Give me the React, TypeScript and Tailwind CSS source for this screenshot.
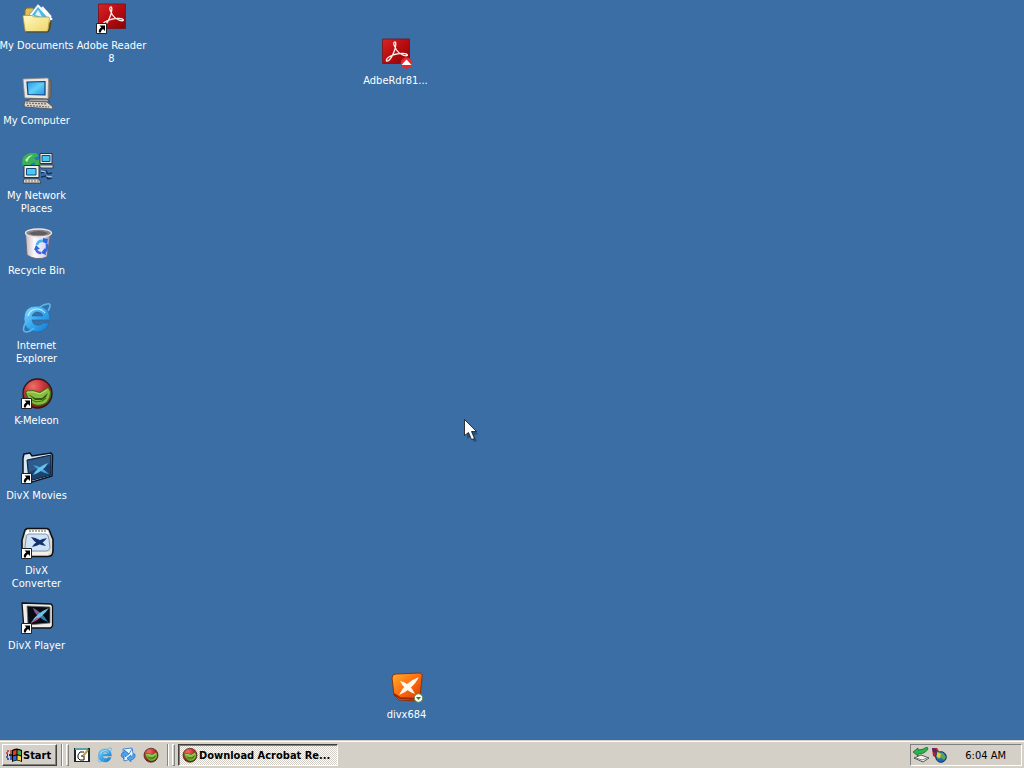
import type { ReactNode } from "react";

function ShortcutArrow() {
  return (
    <g>
      <path d="M.5 21.500h10v10H.5z" fill="#fff" stroke="#222" strokeWidth="1" />
      <path d="M3.500 23.500h5.500V29l-2-2q-2 1-2.200 3.500H3Q2 27.500 5.300 25.300z" fill="#000" />
    </g>
  );
}

function Icon32({ children }: { children: ReactNode }) {
  return (
    <svg viewBox="0 0 32 32" className="size-8 shrink-0 overflow-visible" aria-hidden="true">
      {children}
    </svg>
  );
}

function DocumentsIcon() {
  return (
    <Icon32>
      <defs>
        <linearGradient id="folder" x1="0" y1="0" x2="1" y2="1">
          <stop offset="0" stopColor="#fffac0" />
          <stop offset="1" stopColor="#efd56a" />
        </linearGradient>
      </defs>
      <path d="M4 14V8l2-2h6l2 3h13v18H5z" fill="#e2c04e" stroke="#8f7524" />
      <path d="m8 13 9-11 15 15-5 5z" fill="#f6fbff" stroke="#6d8fb0" strokeWidth=".8" />
      <path d="m11 13 6-8 9 10-4 3z" fill="#4fb7e8" />
      <path d="m14 13 3-5 2 3 2 4z" fill="#d8f4fa" />
      <path d="m21 5 9 10" stroke="#fff" strokeWidth="2" />
      <path d="M2 14.500q0-1 1-1h8l2 1.500h14q1.500 0 1.500 1.500L27 28q0 1.500-1.500 1.500H5.500Q4 29.500 4 28z" fill="url(#folder)" stroke="#b59a3e" strokeWidth=".8" />
      <path d="M5 30h22l2-4 1-8" fill="none" stroke="#4b471c" strokeWidth="1.200" />
    </Icon32>
  );
}

function ComputerIcon() {
  return (
    <Icon32>
      <defs>
        <linearGradient id="screen" x1="0" y1="0" x2="1" y2="1">
          <stop offset="0" stopColor="#2b93e4" />
          <stop offset=".5" stopColor="#5fd0fb" />
          <stop offset="1" stopColor="#2492e0" />
        </linearGradient>
      </defs>
      <path d="m26 2 4 2v16l-4 3z" fill="#77716c" stroke="#4d4947" strokeWidth=".6" />
      <path d="m2 2 24-1q1.500 0 1.500 1.500L27 22 5 21q-1.500 0-1.500-1.500z" fill="#e9e6e1" stroke="#8d8a86" strokeWidth=".8" />
      <path d="m6 5 18-.5V18l-17-.5z" fill="url(#screen)" stroke="#123f77" strokeWidth="1.200" />
      <path d="M8 22h18l3 3H6z" fill="#aaa6a2" stroke="#333" strokeWidth=".8" />
      <path d="m4 24 22 1 6 5-1 2-27-2-1-2z" fill="#d8d3cd" stroke="#504b48" strokeWidth=".8" />
      <path d="m5 26 21 1M6 28.500l22 1.500" stroke="#786b66" strokeWidth="1.200" strokeDasharray="2 1" />
    </Icon32>
  );
}

function NetworkIcon() {
  return (
    <Icon32>
      <circle cx="11" cy="11" r="10" fill="#2673c4" />
      <path d="M1 11q0-8 8-10h6l3 3-5 2 3 3-6 3-1 5-5 2zM14 9l5-2 2 5-4 7-4-3z" fill="#39b255" />
      <path d="m4 8 4-4 4-1-4 3-2 4z" fill="#c2f5b3" />
      <path d="M19 1.500h12v10H19z" fill="#eceae5" stroke="#333" />
      <path d="M21 3.500h8v6h-8z" fill="#42c6f2" stroke="#16477d" />
      <path d="M18 13h14v3H20z" fill="#ddd8d0" stroke="#333" strokeWidth=".8" />
      <path d="M3 13.500h15v12H3z" fill="#f1eee8" stroke="#333" />
      <path d="M5.500 16.500H15v6.500H5.500z" fill="#47cbf5" stroke="#17477c" />
      <path d="M3 27h15l2 4H2z" fill="#e5dfd5" stroke="#333" strokeWidth=".8" />
      <path d="M4 29h14" stroke="#706860" strokeDasharray="2 1" />
      <path d="m20 21 5-2 2 3 4-1M20 25l5-1 2 3 4-1" fill="none" stroke="#162f61" strokeWidth="1.500" />
      <path d="m20 19 5 1M25 24l6 1" stroke="#b9d6f2" />
    </Icon32>
  );
}

function RecycleIcon() {
  return (
    <Icon32>
      <defs>
        <linearGradient id="bin" x1="0" x2="1">
          <stop offset="0" stopColor="#c4b9be" />
          <stop offset=".35" stopColor="#fbfaff" />
          <stop offset=".75" stopColor="#dadaf4" />
          <stop offset="1" stopColor="#807a87" />
        </linearGradient>
      </defs>
      <path d="m4.500 6 1.500 22q9 6 20 2L30 5z" fill="url(#bin)" stroke="#67616a" strokeWidth=".8" />
      <ellipse cx="17.500" cy="6" rx="13" ry="4" fill="#8c8588" stroke="#e8e5e8" strokeWidth="1.300" />
      <path d="M8 6q10-4 19 0l-3 2H11z" fill="#625c60" />
      <g fill="none" strokeWidth="2.600">
        <path d="M16 18q1-5 7-4" stroke="#4bb4ec" />
        <path d="M26 17q1 6-3 8" stroke="#3569e0" />
        <path d="M20 26q-4 0-5-4" stroke="#5263dd" />
      </g>
      <path d="m22 11 5 1-1 5-4-2zM25 28l-5-2 4-5zM13 23l2-5 4 4z" fill="#2e63de" />
    </Icon32>
  );
}

function ExplorerShapes() {
  return (
    <>
      <defs>
        <linearGradient id="ie" x1="0" y1="0" x2="1" y2="1">
          <stop offset="0" stopColor="#8edcff" />
          <stop offset=".5" stopColor="#35a8f1" />
          <stop offset="1" stopColor="#1277cc" />
        </linearGradient>
      </defs>
      <path
        d="M29 18H11q1 6 7 5 3 0 4-2h6q-3 9-12 9Q3 29 3 17 3 4 16 4q13 1 13 14M11 14h11q-1-4-6-4t-5 4"
        fillRule="evenodd"
        fill="url(#ie)"
        stroke="#1c66a7"
        strokeWidth=".6"
      />
      <path d="M27 9c3-5 3-8-1-7-6 1-14 7-19 15-5 7-6 13-2 13 3 0 6-2 8-4" fill="none" stroke="#58b8ef" strokeWidth="1.600" />
      <path d="M7 14q2-7 9-7 5 0 8 4" fill="none" stroke="#c3f0ff" strokeWidth="1.200" />
    </>
  );
}

function MeleonShapes() {
  return (
    <>
      <defs>
        <radialGradient id="melon" cx=".35" cy=".25" r=".8">
          <stop offset="0" stopColor="#ee6f68" />
          <stop offset=".45" stopColor="#c93338" />
          <stop offset="1" stopColor="#711317" />
        </radialGradient>
      </defs>
      <circle cx="16.500" cy="16.500" r="14.500" fill="url(#melon)" stroke="#39130e" strokeWidth="1.300" />
      <path d="m3 14 9-1 7 2 8-5 3 4q1 7-4 12-7 5-13 2Q7 24 3 14" fill="#3c6b12" />
      <path d="m5 15 7-1 7 2 8-5 2 4q0 7-5 11-6 3-11 1-5-3-8-12" fill="#88bd42" />
      <path d="m7 17 7 4 7 0 6-5-2 4-4 3-7 0z" fill="#31580e" />
      <path d="m9 22 6 3 6-1 4-3" fill="none" stroke="#41701a" strokeWidth="1.200" />
      <path d="m6 15 6 0 7 2 7-4" fill="none" stroke="#c5df74" strokeWidth="1" />
    </>
  );
}

function AdobeShapes() {
  return (
    <>
      <defs>
        <linearGradient id="adobe" x1="0" y1="0" x2="1" y2="1">
          <stop offset="0" stopColor="#d92524" />
          <stop offset=".5" stopColor="#b80c11" />
          <stop offset="1" stopColor="#850508" />
        </linearGradient>
      </defs>
      <path d="M2.500 2h27v24.500h-27z" fill="url(#adobe)" stroke="#781014" strokeWidth=".8" />
      <path
        d="M14.500 5c2.500-1 1 7-1 11-2 5-5 9-7 8-1-3 5-6 10-7 4-1 10-1 11 1 0 2-8 0-11-5-2-4-4-7-2-8"
        fill="none"
        stroke="#fff0e9"
        strokeWidth="1.300"
        strokeLinejoin="round"
      />
    </>
  );
}

function MoviesIcon() {
  return (
    <Icon32>
      <path d="m2 6 1-4 6-1 2 3 19-3 1.500 2-.5 21L8 31l-6-4z" fill="#d7e6f2" stroke="#071421" strokeWidth="1.500" />
      <path d="m6 8 24-5v20L8 29z" fill="#1e426f" stroke="#0b2039" />
      <path d="m7 9 22-5v8L8 20z" fill="#2f5b8a" />
      <path d="M12 13q8 1 16 9-10-2-16-9" fill="#3fa2da" />
      <path d="M27 11q-4 8-15 12 4-8 15-12" fill="#65c4ee" />
      <ShortcutArrow />
    </Icon32>
  );
}

function ConverterIcon() {
  return (
    <Icon32>
      <path d="M6 1.500h20l2 1 4 10v11q0 6-5 6H5q-4-1-4-6V13L4 3z" fill="#deded9" stroke="#111" strokeWidth="1.600" />
      <path d="M6 3h20l2 4H4z" fill="#fff" />
      <path d="M8 4h17" stroke="#8e8e88" strokeWidth="1.300" strokeDasharray="2 1" />
      <path d="M7 7h18q2 0 3 5l1 9q-1 3-4 3H8q-4 0-4-4l1-8q0-4 2-5" fill="#cfe2f6" stroke="#8097b1" />
      <path d="M3 25h26l-3 3H6z" fill="#f5f1e6" />
      <path d="M10 10q9 1 15 9-10-1-15-9M26 11q-5 7-15 9 4-7 15-9" fill="#12326e" />
      <ShortcutArrow />
    </Icon32>
  );
}

function PlayerIcon() {
  return (
    <Icon32>
      <path d="m1 1 29 1 1.500 2v20l-2 2H10l-7 2z" fill="#efeeea" stroke="#111" strokeWidth="1.300" />
      <path d="m6 4 23 1v16L7 23z" fill="#080b12" stroke="#6f7276" strokeWidth=".8" />
      <path d="M12 6q9 4 15 14-11-4-15-14" fill="#327eb1" />
      <path d="M28 6Q22 15 10 21 15 11 28 6" fill="#72c1de" />
      <path d="M12 6q3 2 6 5l-2 2q-3-3-4-7M10 21q2-3 6-5l3 0q-3 3-9 5" fill="#b34886" />
      <ShortcutArrow />
    </Icon32>
  );
}

function DivxIcon() {
  return (
    <Icon32>
      <defs>
        <linearGradient id="divx" x1="0" y1="0" x2="1" y2="1">
          <stop offset="0" stopColor="#ffb12e" />
          <stop offset=".5" stopColor="#ff6b10" />
          <stop offset="1" stopColor="#c93804" />
        </linearGradient>
      </defs>
      <path d="m5 3 23-1q4 0 3 4l-2 21q0 3-4 3l-17-1-5-5L1 7q0-4 4-4" fill="url(#divx)" stroke="#8e3108" />
      <path d="m3 23 6 4 17 1" fill="none" stroke="#9f2703" strokeWidth="2" />
      <path d="M9 10q10 2 15 13Q13 19 9 10M28 6Q22 18 8 24 14 11 28 6" fill="#fff9ef" />
      <circle cx="27.500" cy="27" r="4.300" fill="#f2fff0" stroke="#667b4f" />
      <path d="M25 26h5l-2.500 3z" fill="#387919" />
    </Icon32>
  );
}

function DesktopItem({ label, children }: { label: string; children: ReactNode }) {
  return (
    <button
      type="button"
      className="flex h-[75px] w-[73px] flex-col items-center gap-[5px] pt-0.5 text-center leading-[13px] text-white"
    >
      {children}
      <span className="w-[75px]">{label}</span>
    </button>
  );
}

function Icon16({ children, box = "0 0 16 16" }: { children: ReactNode; box?: string }) {
  return (
    <svg viewBox={box} className="size-4 shrink-0" aria-hidden="true">
      {children}
    </svg>
  );
}

function WindowsFlag() {
  return (
    <Icon16>
      <path d="M6 3q4-3 10 0v12q-5-3-10 0z" fill="#000" />
      <path d="M7 4q2-1 3.500-1v4.500Q9 7.500 7 8.500z" fill="#e33b24" />
      <path d="M11.500 3q2 0 3.500 1v4.500q-1-1-3.500-1z" fill="#35b54a" />
      <path d="M7 9.500q2-1 3.500-1V13Q9 13 7 14z" fill="#2869dc" />
      <path d="M11.500 8.500q2 0 3.500 1V14q-1-1-3.500-1z" fill="#f7d52d" />
      <path d="M1 4h2M4 4h2M0 6h2M4 6h2" stroke="#b92d21" strokeWidth="1.500" />
      <path d="M1 8h1M3 8h3" stroke="#000" strokeWidth="1.500" />
      <path d="M0 10h2M4 10h2M1 12h2M4 12h2" stroke="#1b38a1" strokeWidth="1.500" />
    </Icon16>
  );
}

function Grip() {
  return (
    <div className="flex h-[22px] gap-[3px]" aria-hidden="true">
      <span className="w-0.5 border-r border-l border-r-white border-l-[#87847e]" />
      <span className="w-[3px] border border-t-white border-r-[#87847e] border-b-[#87847e] border-l-white" />
    </div>
  );
}

function QuickLaunch({ label, children }: { label: string; children: ReactNode }) {
  return (
    <button type="button" aria-label={label} className="flex w-[23px] items-center justify-center">
      {children}
    </button>
  );
}

export default function App() {
  return (
    <div className="flex min-h-screen flex-col overflow-hidden bg-[#3b6ea5] font-['DejaVu_Sans_Condensed','DejaVu_Sans',sans-serif] text-[11px]">
      <main className="relative flex flex-1 gap-0.5">
        <div className="flex flex-col">
          <DesktopItem label="My Documents"><DocumentsIcon /></DesktopItem>
          <DesktopItem label="My Computer"><ComputerIcon /></DesktopItem>
          <DesktopItem label="My Network Places"><NetworkIcon /></DesktopItem>
          <DesktopItem label="Recycle Bin"><RecycleIcon /></DesktopItem>
          <DesktopItem label="Internet Explorer"><Icon32><ExplorerShapes /></Icon32></DesktopItem>
          <DesktopItem label="K-Meleon"><Icon32><MeleonShapes /><ShortcutArrow /></Icon32></DesktopItem>
          <DesktopItem label="DivX Movies"><MoviesIcon /></DesktopItem>
          <DesktopItem label="DivX Converter"><ConverterIcon /></DesktopItem>
          <DesktopItem label="DivX Player"><PlayerIcon /></DesktopItem>
        </div>
        <DesktopItem label="Adobe Reader 8"><Icon32><AdobeShapes /><ShortcutArrow /></Icon32></DesktopItem>
        <div className="absolute top-[35px] left-[359px]">
          <DesktopItem label="AdbeRdr81...">
            <Icon32>
              <AdobeShapes />
              <circle cx="26.500" cy="26" r="5.800" fill="#e8262b" />
              <path d="m26.500 22.500 5 5.500h-10z" fill="#fff" />
            </Icon32>
          </DesktopItem>
        </div>
        <div className="absolute top-[669px] left-[370px]">
          <DesktopItem label="divx684"><DivxIcon /></DesktopItem>
        </div>
        <svg viewBox="0 0 16 24" className="absolute top-[419px] left-[464px] h-6 w-4" aria-hidden="true">
          <path d="m3 3 11 12-4 1 3 6-3 1-3-6-4 3z" fill="#183a60" opacity=".6" />
          <path d="M.5.500v16l4-3 3 7 3-1-3-7h5z" fill="#fff" stroke="#111" strokeWidth=".8" />
        </svg>
      </main>

      <footer className="flex h-7 items-center border-t border-[#d4d0c8] bg-[#d4d0c8] pr-0.5 pl-0.5 text-black shadow-[inset_0_1px_0_#fff]">
        <button
          type="button"
          className="flex h-[22px] w-[55px] items-center gap-px border border-t-white border-r-[#404040] border-b-[#404040] border-l-white pl-[3px] font-bold shadow-[inset_-1px_-1px_0_#808080]"
        >
          <WindowsFlag />
          <span className="pt-1">Start</span>
        </button>
        <div className="ml-1"><Grip /></div>
        <nav aria-label="Quick launch" className="mr-px ml-px flex h-[22px]">
          <QuickLaunch label="Show Desktop">
            <Icon16>
              <path d="M0 1h16v14H0z" fill="#18282c" />
              <path d="M1 1h13v2H1z" fill="#5aa4a9" />
              <path d="M2 3h12v11H2z" fill="#fff" />
              <path d="M10 5H6L4 8v3l2 2h4V9H7" fill="none" stroke="#111" />
              <path d="m8 9 6-7 1 1-6 7z" fill="#e8bb32" stroke="#553b0b" strokeWidth=".5" />
            </Icon16>
          </QuickLaunch>
          <QuickLaunch label="Internet Explorer"><Icon16 box="0 0 32 32"><ExplorerShapes /></Icon16></QuickLaunch>
          <QuickLaunch label="Outlook Express">
            <Icon16>
              <path d="m3 2 9-1 2 10-10 3z" fill="#e8f5ff" stroke="#4385d7" />
              <path d="m4 3 5 4 3-5" fill="none" stroke="#428adb" />
              <path d="M1 9q0-4 4-4l-1-2 5 4-4 3V8q-2 0-1 4z" fill="#4aa5ee" stroke="#2168be" strokeWidth=".6" />
              <path d="M15 7q1 5-4 6v2l-4-4 4-3v2q2 0 2-3z" fill="#4aa5ee" stroke="#2168be" strokeWidth=".6" />
            </Icon16>
          </QuickLaunch>
          <QuickLaunch label="K-Meleon"><Icon16 box="0 0 33 32"><MeleonShapes /></Icon16></QuickLaunch>
        </nav>
        <div className="ml-1"><Grip /></div>
        <button
          type="button"
          aria-pressed="true"
          className="ml-[3px] flex h-[22px] w-40 items-center gap-px border border-t-[#404040] border-r-white border-b-white border-l-[#404040] bg-[repeating-conic-gradient(#fff_0%_25%,#d4d0c8_0%_50%)] bg-size-[2px_2px] pl-[3px] font-bold shadow-[inset_1px_1px_0_#808080]"
        >
          <Icon16 box="0 0 33 32"><MeleonShapes /></Icon16>
          <span className="pt-1 whitespace-nowrap">Download Acrobat Re...</span>
        </button>
        <div className="ml-auto flex h-[22px] w-28 items-center gap-0.5 border border-t-[#808080] border-r-white border-b-white border-l-[#808080] pr-[15px] pl-0.5">
          <Icon16>
            <path d="m1 11 7-3 8 3-6 4z" fill="#f7f7f2" stroke="#333" strokeWidth=".8" />
            <path d="m3 11 6 2 5-2" fill="none" stroke="#808080" />
            <path d="m0 5 5-4v2q5 0 9-3l1 2q-3 5-10 5v2z" fill="#28b84a" stroke="#14581f" strokeWidth=".7" />
          </Icon16>
          <Icon16>
            <path d="M1 1h5l3 5-3 5-4-2z" fill="#b82228" />
            <path d="m1 1 4 1 1 4-4-1z" fill="#30337d" />
            <circle cx="10" cy="10" r="5.300" fill="#2263bd" stroke="#16325d" />
            <path d="m7 5 5 1 3 4-2 3-3-2-3 1-2-3z" fill="#54a951" />
            <path d="m6 5 4 2-1 4-3-1z" fill="#e9c848" />
          </Icon16>
          <time className="ml-auto pt-1 whitespace-nowrap">6:04 AM</time>
        </div>
      </footer>
    </div>
  );
}
